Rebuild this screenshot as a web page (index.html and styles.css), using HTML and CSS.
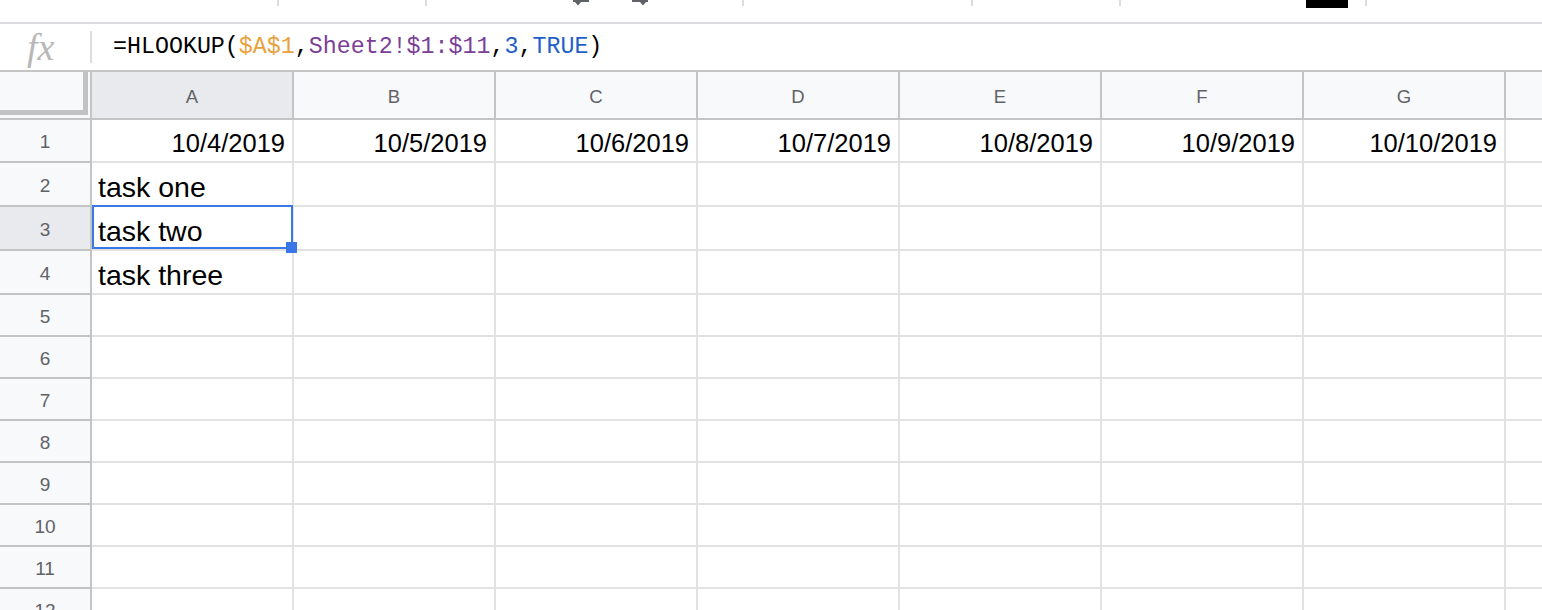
FILE: index.html
```html
<!DOCTYPE html>
<html lang="en">
<head>
    <meta charset="UTF-8">
    <meta name="viewport" content="width=device-width, initial-scale=1.0">
    <title>Sheet - HLOOKUP</title>
    <link rel="stylesheet" href="styles.css">
</head>
<body>

<!-- toolbar, only its bottom edge is in view -->
<div class="toolbar">
    <div class="tb-group tb-first"></div>
    <div class="tb-group tb-small"></div>
    <div class="tb-group tb-history">
        <svg class="tb-icon" width="16" height="6" viewBox="0 0 16 6"><path d="M0 0H16V2H8L5 5.5L2 2H0Z" fill="#5f6368"/></svg>
        <svg class="tb-icon tb-redo" width="16" height="6" viewBox="0 0 16 6"><path d="M0 0H16V2H14L11 5.5L8 2H0Z" fill="#5f6368"/></svg>
    </div>
    <div class="tb-group tb-format"></div>
    <div class="tb-group tb-small"></div>
    <div class="tb-group tb-color">
        <span class="tb-swatch"></span>
    </div>
    <div class="tb-group tb-rest"></div>
</div>

<!-- formula bar -->
<div class="formula-bar">
    <div class="fx">fx</div>
    <div class="fb-sep"></div>
    <div class="formula">=HLOOKUP(<span class="ref-a">$A$1</span>,<span class="ref-b">Sheet2!$1:$11</span>,<span class="num">3</span>,<span class="num">TRUE</span>)</div>
</div>

<!-- grid -->
<div class="sheet">
    <div class="row row-head">
        <div class="corner"><div class="freeze"></div></div>
        <div class="col-head active">A</div>
        <div class="col-head">B</div>
        <div class="col-head">C</div>
        <div class="col-head">D</div>
        <div class="col-head">E</div>
        <div class="col-head">F</div>
        <div class="col-head">G</div>
        <div class="col-head col-last"></div>
    </div>
    <div class="row row-first">
        <div class="row-num">1</div>
        <div class="cell date">10/4/2019</div>
        <div class="cell date">10/5/2019</div>
        <div class="cell date">10/6/2019</div>
        <div class="cell date">10/7/2019</div>
        <div class="cell date">10/8/2019</div>
        <div class="cell date">10/9/2019</div>
        <div class="cell date">10/10/2019</div>
        <div class="cell cell-last"></div>
    </div>
    <div class="row row-tall">
        <div class="row-num">2</div>
        <div class="cell">task one</div>
        <div class="cell"></div><div class="cell"></div><div class="cell"></div>
        <div class="cell"></div><div class="cell"></div><div class="cell"></div>
        <div class="cell cell-last"></div>
    </div>
    <div class="row row-tall">
        <div class="row-num active">3</div>
        <div class="cell selected">task two</div>
        <div class="cell"></div><div class="cell"></div><div class="cell"></div>
        <div class="cell"></div><div class="cell"></div><div class="cell"></div>
        <div class="cell cell-last"></div>
    </div>
    <div class="row row-tall">
        <div class="row-num">4</div>
        <div class="cell">task three</div>
        <div class="cell"></div><div class="cell"></div><div class="cell"></div>
        <div class="cell"></div><div class="cell"></div><div class="cell"></div>
        <div class="cell cell-last"></div>
    </div>
    <div class="row">
        <div class="row-num">5</div>
        <div class="cell"></div><div class="cell"></div><div class="cell"></div><div class="cell"></div>
        <div class="cell"></div><div class="cell"></div><div class="cell"></div>
        <div class="cell cell-last"></div>
    </div>
    <div class="row">
        <div class="row-num">6</div>
        <div class="cell"></div><div class="cell"></div><div class="cell"></div><div class="cell"></div>
        <div class="cell"></div><div class="cell"></div><div class="cell"></div>
        <div class="cell cell-last"></div>
    </div>
    <div class="row">
        <div class="row-num">7</div>
        <div class="cell"></div><div class="cell"></div><div class="cell"></div><div class="cell"></div>
        <div class="cell"></div><div class="cell"></div><div class="cell"></div>
        <div class="cell cell-last"></div>
    </div>
    <div class="row">
        <div class="row-num">8</div>
        <div class="cell"></div><div class="cell"></div><div class="cell"></div><div class="cell"></div>
        <div class="cell"></div><div class="cell"></div><div class="cell"></div>
        <div class="cell cell-last"></div>
    </div>
    <div class="row">
        <div class="row-num">9</div>
        <div class="cell"></div><div class="cell"></div><div class="cell"></div><div class="cell"></div>
        <div class="cell"></div><div class="cell"></div><div class="cell"></div>
        <div class="cell cell-last"></div>
    </div>
    <div class="row">
        <div class="row-num">10</div>
        <div class="cell"></div><div class="cell"></div><div class="cell"></div><div class="cell"></div>
        <div class="cell"></div><div class="cell"></div><div class="cell"></div>
        <div class="cell cell-last"></div>
    </div>
    <div class="row">
        <div class="row-num">11</div>
        <div class="cell"></div><div class="cell"></div><div class="cell"></div><div class="cell"></div>
        <div class="cell"></div><div class="cell"></div><div class="cell"></div>
        <div class="cell cell-last"></div>
    </div>
    <div class="row">
        <div class="row-num">12</div>
        <div class="cell"></div><div class="cell"></div><div class="cell"></div><div class="cell"></div>
        <div class="cell"></div><div class="cell"></div><div class="cell"></div>
        <div class="cell cell-last"></div>
    </div>
</div>

</body>
</html>
```

FILE: styles.css
```css
body {
    margin: 0;
    padding: 0;
    font-family: "Liberation Sans", Arial, sans-serif;
    background-color: #fff;
    height: 610px;
    overflow: hidden;
}

/* toolbar (cut off at the top) */
.toolbar {
    display: flex;
    align-items: flex-start;
    height: 22px;
    border-bottom: 2px solid #dadce0;
}

.tb-group {
    display: flex;
    align-items: flex-start;
    height: 6px;
    border-left: 2px solid #dadce0;
    box-sizing: border-box;
}

.tb-first {
    width: 277px;
    border-left: none;
}

.tb-small {
    width: 148px;
}

.tb-history {
    width: 317px;
    padding-left: 146px;
}

.tb-redo {
    margin-left: 43px;
}

.tb-format {
    width: 229px;
}

.tb-color {
    width: 246px;
    padding-left: 185px;
}

.tb-swatch {
    display: block;
    width: 42px;
    height: 8px;
    background-color: #000;
}

.tb-rest {
    flex: 1;
}

/* formula bar */
.formula-bar {
    display: flex;
    align-items: center;
    height: 46px;
    border-bottom: 2px solid #c4c4c4;
}

.fx {
    width: 90px;
    box-sizing: border-box;
    padding-left: 27px;
    font-family: "Liberation Serif", serif;
    font-style: italic;
    font-size: 38px;
    color: #b8b8b8;
    line-height: 1;
}

.fb-sep {
    width: 2px;
    height: 32px;
    background-color: #dadce0;
}

.formula {
    margin-left: 21px;
    font-family: "Liberation Mono", monospace;
    font-size: 23.3px;
    color: #000;
    white-space: nowrap;
}

.ref-a {
    color: #e9a23b;
}

.ref-b {
    color: #7b3f98;
}

.num {
    color: #1f5fc8;
}

/* grid */
.row {
    display: flex;
    height: 42px;
}

.row-head {
    height: 48px;
}

.row-first {
    height: 43px;
}

.row-tall {
    height: 44px;
}

.corner,
.col-head,
.row-num,
.cell {
    box-sizing: border-box;
    flex-shrink: 0;
}

.corner {
    width: 92px;
    background-color: #f8f9fa;
    border-right: 2px solid #c4c4c4;
    border-bottom: 2px solid #c4c4c4;
}

.freeze {
    width: 88px;
    height: 43px;
    box-sizing: border-box;
    border-right: 5px solid #c2c2c2;
    border-bottom: 5px solid #c2c2c2;
}

.col-head {
    width: 202px;
    display: flex;
    align-items: center;
    justify-content: center;
    padding-top: 3px;
    background-color: #f8f9fa;
    border-right: 2px solid #c4c4c4;
    border-bottom: 2px solid #c4c4c4;
    font-size: 18.5px;
    color: #5f6368;
}

.col-head.active,
.row-num.active {
    background-color: #e8eaed;
}

.col-last {
    flex: 1;
    border-right: none;
}

.row-num {
    width: 92px;
    display: flex;
    align-items: center;
    justify-content: center;
    padding-top: 3px;
    background-color: #f8f9fa;
    border-right: 2px solid #c4c4c4;
    border-bottom: 2px solid #c4c4c4;
    font-size: 19px;
    color: #5f6368;
}

.cell {
    width: 202px;
    display: flex;
    align-items: flex-end;
    padding: 0 7px 4px 6px;
    border-right: 2px solid #e2e2e3;
    border-bottom: 2px solid #e2e2e3;
    font-size: 28.5px;
    line-height: 1;
    color: #000;
    white-space: nowrap;
}

.cell.date {
    justify-content: flex-end;
    padding-bottom: 5px;
    font-size: 25.5px;
}

.cell-last {
    flex: 1;
    border-right: none;
}

/* active cell outline and fill handle */
.cell.selected {
    position: relative;
}

.cell.selected::after {
    content: "";
    position: absolute;
    left: 0;
    top: -2px;
    right: -1px;
    bottom: 0;
    border: 2px solid #3b78e7;
}

.cell.selected::before {
    content: "";
    position: absolute;
    right: -5px;
    bottom: -4px;
    width: 11px;
    height: 11px;
    background-color: #3b78e7;
    z-index: 1;
}
```
